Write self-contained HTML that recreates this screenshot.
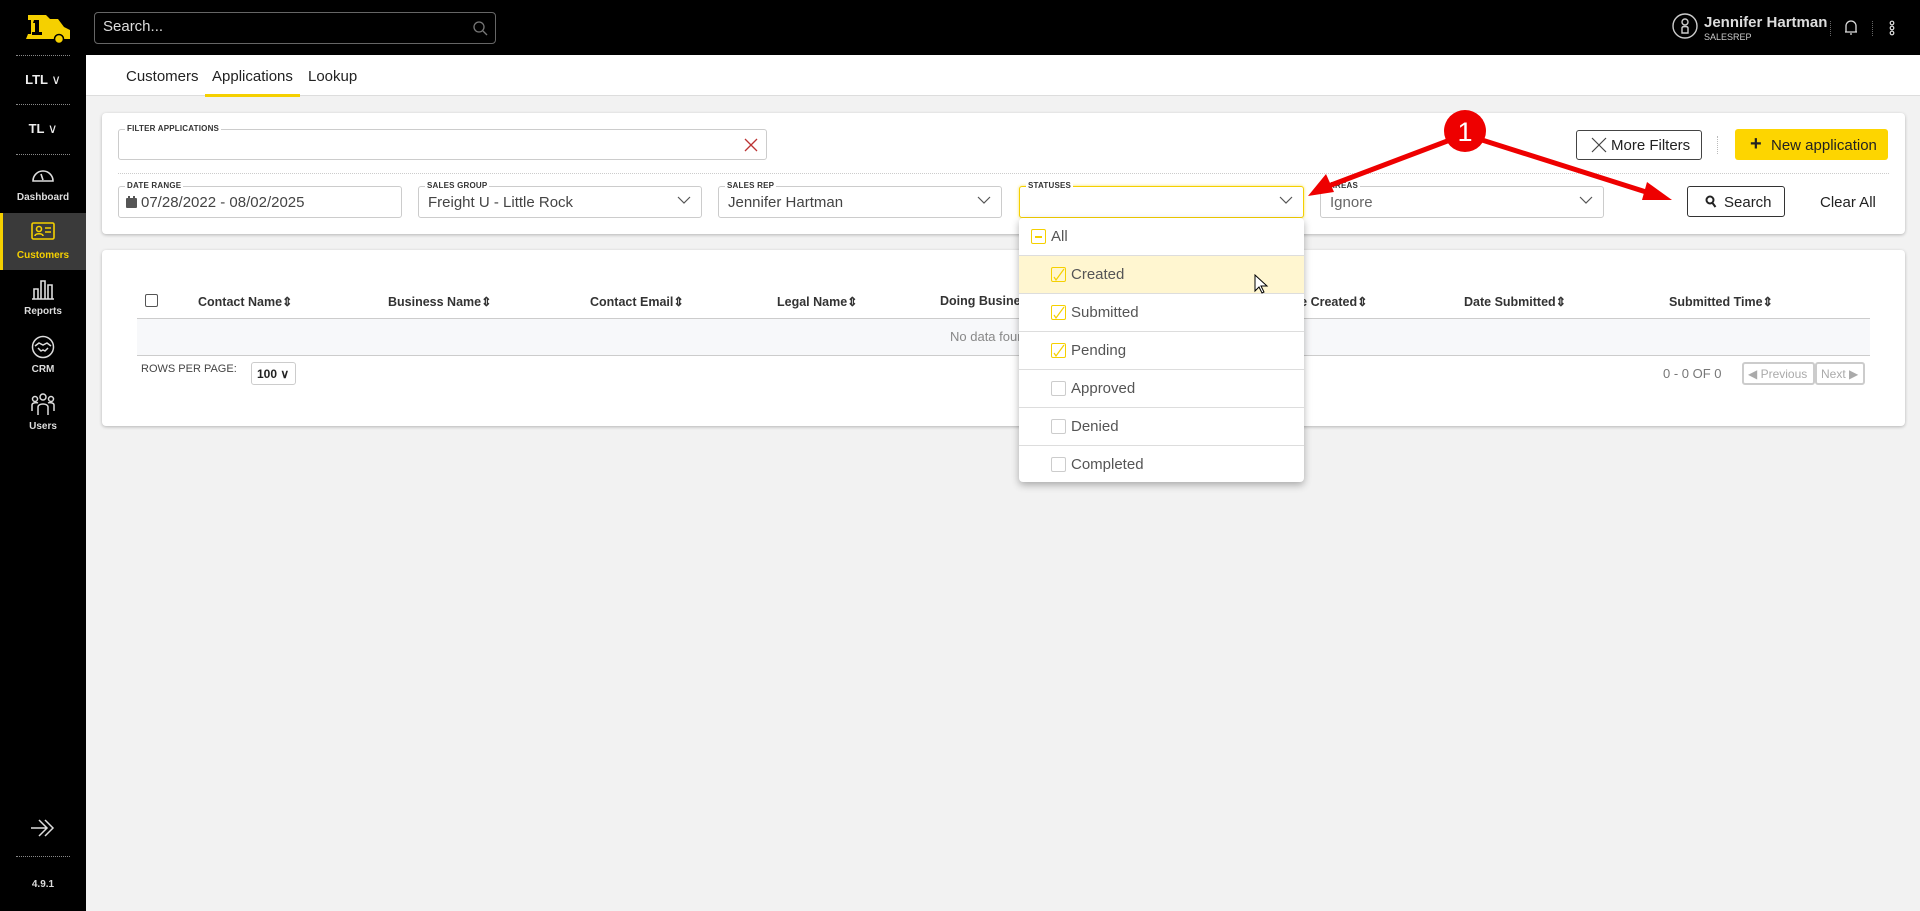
<!DOCTYPE html>
<html><head><meta charset="utf-8"><style>
*{box-sizing:border-box;margin:0;padding:0}
body{width:1920px;height:911px;overflow:hidden;background:#f2f2f2;font-family:"Liberation Sans",sans-serif;position:relative;color:#222}
.a{position:absolute}
.side{left:0;top:0;width:86px;height:911px;background:#000}
.top{left:86px;top:0;width:1834px;height:55px;background:#000}
.dot{position:absolute;left:16px;width:54px;border-top:1px dotted #888}
.sl{position:absolute;width:86px;text-align:center;color:#ddd;font-size:10px;font-weight:bold}
.card{background:#fff;border-radius:4px;box-shadow:0 1px 3px rgba(0,0,0,.25)}
.fld{position:absolute;border:1px solid #ccc;border-radius:3px;height:32px;background:#fff}
.lbl{position:absolute;top:-6px;left:6px;background:#fff;padding:0 2px;font-size:8px;font-weight:bold;color:#333;letter-spacing:.2px}
.val{position:absolute;left:9px;top:7px;font-size:15px;color:#444}
.chev{position:absolute;right:10px;top:8px}
.th{position:absolute;top:294px;font-size:12.5px;font-weight:bold;color:#333}
.dd{left:1019px;top:218px;width:285px;height:264px;background:#fff;border-radius:4px;box-shadow:0 3px 8px rgba(0,0,0,.3)}
.it{position:absolute;left:0;width:285px;height:38px;border-bottom:1px solid #ddd;font-size:15px;color:#555}
.cb{position:absolute;left:32px;top:11px;width:15px;height:15px;border:1px solid #ccc;border-radius:2px}
.cb.on{border-color:#f5d000}
.cb svg{position:absolute;left:1px;top:0}
.it span{position:absolute;left:52px;top:10px}
</style></head><body>
<div class="a side"></div>
<div class="a top"></div>
<svg class="a" style="left:22px;top:12px" width="50" height="32" viewBox="0 0 50 32"><path d="M6 3h18l4 4h8l6 8 6 3v9H4l2-5h3V8H6z" fill="#f5d000"/><path d="M12 8h5v12h3v3h-10v-3h3v-9h-2z" fill="#000"/><circle cx="37" cy="27" r="4.5" fill="#f5d000" stroke="#000" stroke-width="1.5"/></svg>
<div class="dot" style="top:55px"></div>
<div class="sl" style="top:72px;font-size:13px;color:#eee">LTL <span style="font-weight:normal">&#8744;</span></div>
<div class="dot" style="top:104px"></div>
<div class="sl" style="top:121px;font-size:13px;color:#eee">TL <span style="font-weight:normal">&#8744;</span></div>
<div class="dot" style="top:154px"></div>
<svg class="a" style="left:31px;top:164px" width="24" height="20" viewBox="0 0 24 20" fill="none" stroke="#ddd" stroke-width="1.6"><path d="M2 17A10 10 0 1 1 22 17Z"/><path d="M12 16l-2-6"/></svg>
<div class="sl" style="top:192px">Dashboard</div>
<div class="a" style="left:0;top:213px;width:86px;height:57px;background:#3a3a3a;border-left:3px solid #f5d000"></div>
<svg class="a" style="left:31px;top:222px" width="24" height="18" viewBox="0 0 24 18" fill="none" stroke="#f5d000" stroke-width="1.6"><rect x="1" y="1" width="22" height="16" rx="1.5"/><circle cx="8" cy="7" r="2.5"/><path d="M4 14c0-3 8-3 8 0M14 6h6M14 10h6"/></svg>
<div class="sl" style="top:250px;color:#f5d000">Customers</div>
<svg class="a" style="left:31px;top:278px" width="24" height="22" viewBox="0 0 24 22" fill="none" stroke="#ddd" stroke-width="1.6"><path d="M1 21h22M3 21V11h4v10M10 21V3h4v18M17 21V7h4v14"/></svg>
<div class="sl" style="top:306px">Reports</div>
<svg class="a" style="left:31px;top:335px" width="24" height="24" viewBox="0 0 24 24" fill="none" stroke="#ddd" stroke-width="1.5"><circle cx="12" cy="12" r="10.5"/><path d="M4 11l4-3 4 2 4-2 4 3M7 13l3 3 2-1 2 1 3-3"/></svg>
<div class="sl" style="top:364px">CRM</div>
<svg class="a" style="left:30px;top:392px" width="26" height="24" viewBox="0 0 26 24" fill="none" stroke="#ddd" stroke-width="1.5"><circle cx="13" cy="5" r="3"/><circle cx="5" cy="7" r="2.5"/><circle cx="21" cy="7" r="2.5"/><path d="M8 23v-8c0-4 10-4 10 0v8M2 19v-6c0-2 4-3 6-2M24 19v-6c0-2-4-3-6-2"/></svg>
<div class="sl" style="top:421px">Users</div>
<svg class="a" style="left:30px;top:818px" width="26" height="20" viewBox="0 0 26 20" fill="none" stroke="#ddd" stroke-width="1.5"><path d="M1 10h16M9 2l8 8-8 8M15 2l8 8-8 8"/></svg>
<div class="dot" style="top:856px"></div>
<div class="sl" style="top:879px">4.9.1</div>

<div class="a" style="left:94px;top:12px;width:402px;height:32px;border:1px solid #666;border-radius:4px"></div>
<div class="a" style="left:103px;top:18px;color:#ddd;font-size:15px">Search...</div>
<svg class="a" style="left:472px;top:20px" width="16" height="16" viewBox="0 0 16 16" fill="none" stroke="#777" stroke-width="1.3"><circle cx="7" cy="7" r="5"/><path d="M11 11l4 4"/></svg>
<svg class="a" style="left:1672px;top:13px" width="26" height="26" viewBox="0 0 26 26" fill="none" stroke="#ccc" stroke-width="1.4"><circle cx="13" cy="13" r="12"/><circle cx="13" cy="9" r="3"/><path d="M10 20v-5c0-2 6-2 6 0v5z"/></svg>
<div class="a" style="left:1704px;top:14px;color:#ddd;font-size:15px;font-weight:bold">Jennifer Hartman</div>
<div class="a" style="left:1704px;top:32px;color:#ccc;font-size:9px">SALESREP</div>
<div class="a" style="left:1830px;top:21px;height:15px;border-left:1px dotted #666"></div>
<svg class="a" style="left:1844px;top:19px" width="14" height="17" viewBox="0 0 14 17" fill="none" stroke="#ddd" stroke-width="1.3"><path d="M2 13V7a5 5 0 0 1 10 0v6zM1 13h12M6 15h2"/></svg>
<div class="a" style="left:1872px;top:21px;height:15px;border-left:1px dotted #666"></div>
<svg class="a" style="left:1889px;top:20px" width="6" height="16" viewBox="0 0 6 16" fill="none" stroke="#ddd" stroke-width="1.2"><circle cx="3" cy="3" r="1.8"/><circle cx="3" cy="8" r="1.8"/><circle cx="3" cy="13" r="1.8"/></svg>

<div class="a" style="left:86px;top:55px;width:1834px;height:41px;background:#fff;border-bottom:1px solid #ddd"></div>
<div class="a" style="left:126px;top:68px;font-size:15px;color:#222">Customers</div>
<div class="a" style="left:212px;top:68px;font-size:15px;color:#222">Applications</div>
<div class="a" style="left:205px;top:94px;width:95px;height:3px;background:#f5d000"></div>
<div class="a" style="left:308px;top:68px;font-size:15px;color:#222">Lookup</div>

<div class="a card" style="left:102px;top:113px;width:1803px;height:121px"></div>
<div class="fld" style="left:118px;top:129px;width:649px;height:31px"><div class="lbl">FILTER APPLICATIONS</div>
<svg style="position:absolute;right:7px;top:7px" width="16" height="16" viewBox="0 0 16 16" stroke="#b33" stroke-width="1.3"><path d="M2 2l12 12M14 2L2 14"/></svg></div>
<div class="a" style="left:118px;top:173px;width:1771px;border-top:1px dotted #ccc"></div>
<div class="a" style="left:1576px;top:130px;width:126px;height:30px;border:1px solid #444;border-radius:3px;background:#fff"></div>
<svg class="a" style="left:1591px;top:137px" width="16" height="16" viewBox="0 0 16 16" stroke="#444" stroke-width="1.2"><path d="M1 1l14 14M15 1L1 15"/></svg>
<div class="a" style="left:1611px;top:137px;font-size:15px;color:#222">More Filters</div>
<div class="a" style="left:1717px;top:136px;height:18px;border-left:1px dotted #bbb"></div>
<div class="a" style="left:1735px;top:129px;width:153px;height:31px;background:#fdd500;border-radius:3px"></div>
<div class="a" style="left:1750px;top:133px;font-size:20px;font-weight:bold">+</div>
<div class="a" style="left:1771px;top:137px;font-size:15px;color:#222">New application</div>

<div class="fld" style="left:118px;top:186px;width:284px"><div class="lbl">DATE RANGE</div>
<svg style="position:absolute;left:7px;top:9px" width="11" height="12" viewBox="0 0 11 12"><rect x="0" y="2" width="11" height="10" rx="1" fill="#555"/><rect x="2" y="0" width="2" height="3" fill="#555"/><rect x="7" y="0" width="2" height="3" fill="#555"/></svg>
<div class="val" style="left:22px">07/28/2022 - 08/02/2025</div></div>
<div class="fld" style="left:418px;top:186px;width:284px"><div class="lbl">SALES GROUP</div><div class="val">Freight U - Little Rock</div>
<svg class="chev" width="14" height="10" viewBox="0 0 14 10" fill="none" stroke="#555" stroke-width="1.2"><path d="M1 2l6 6 6-6"/></svg></div>
<div class="fld" style="left:718px;top:186px;width:284px"><div class="lbl">SALES REP</div><div class="val">Jennifer Hartman</div>
<svg class="chev" width="14" height="10" viewBox="0 0 14 10" fill="none" stroke="#555" stroke-width="1.2"><path d="M1 2l6 6 6-6"/></svg></div>
<div class="fld" style="left:1019px;top:186px;width:285px;border-color:#f5d000;box-shadow:0 0 3px #f5e060"><div class="lbl">STATUSES</div>
<svg class="chev" width="14" height="10" viewBox="0 0 14 10" fill="none" stroke="#555" stroke-width="1.2"><path d="M1 2l6 6 6-6"/></svg></div>
<div class="fld" style="left:1320px;top:186px;width:284px"><div class="lbl">AREAS</div><div class="val" style="color:#666">Ignore</div>
<svg class="chev" width="14" height="10" viewBox="0 0 14 10" fill="none" stroke="#555" stroke-width="1.2"><path d="M1 2l6 6 6-6"/></svg></div>
<div class="a" style="left:1687px;top:186px;width:98px;height:31px;border:1px solid #333;border-radius:3px;background:#fff"></div>
<svg class="a" style="left:1705px;top:195px" width="12" height="13" viewBox="0 0 12 13" fill="none" stroke="#222" stroke-width="2"><circle cx="5" cy="5" r="3.5"/><path d="M7.5 8l3 4"/></svg>
<div class="a" style="left:1724px;top:194px;font-size:15px;color:#222">Search</div>
<div class="a" style="left:1820px;top:194px;font-size:15px;color:#222">Clear All</div>

<div class="a card" style="left:102px;top:250px;width:1803px;height:176px"></div>
<div class="a" style="left:145px;top:294px;width:13px;height:13px;border:1px solid #555;border-radius:2px"></div>
<div class="th" style="left:198px">Contact Name&#8661;</div>
<div class="th" style="left:388px">Business Name&#8661;</div>
<div class="th" style="left:590px">Contact Email&#8661;</div>
<div class="th" style="left:777px">Legal Name&#8661;</div>
<div class="th" style="left:940px">Doing Business</div>
<div class="th" style="left:1280px">Date Created&#8661;</div>
<div class="th" style="left:1464px">Date Submitted&#8661;</div>
<div class="th" style="left:1669px">Submitted Time&#8661;</div>
<div class="a" style="left:137px;top:318px;width:1733px;height:38px;background:#f7f8fa;border-top:1px solid #ccc;border-bottom:1px solid #ccc"></div>
<div class="a" style="left:950px;top:329px;font-size:13px;color:#888">No data found</div>
<div class="a" style="left:141px;top:363px;font-size:11px;color:#444">ROWS PER PAGE:</div>
<div class="a" style="left:251px;top:362px;width:45px;height:23px;border:1px solid #ccc;border-radius:3px;font-size:12px;font-weight:bold;padding:4px 5px">100 &#8744;</div>
<div class="a" style="left:1663px;top:366px;font-size:13px;color:#777">0 - 0 OF 0</div>
<div class="a" style="left:1742px;top:362px;width:73px;height:23px;border:2px solid #ccc;border-radius:3px;font-size:12px;color:#aaa;padding:3px 4px">&#9664; Previous</div>
<div class="a" style="left:1815px;top:362px;width:50px;height:23px;border:2px solid #ccc;border-radius:3px;font-size:12px;color:#aaa;padding:3px 4px">Next &#9654;</div>

<div class="a dd">
<div class="it" style="top:0"><div class="cb on" style="left:12px"><div style="position:absolute;left:3px;top:6px;width:7px;height:1.5px;background:#f5d000"></div></div><span style="left:32px">All</span></div>
<div class="it" style="top:38px;background:#fff6d0"><div class="cb on"><svg width="13" height="13" viewBox="0 0 13 13" fill="none" stroke="#f5d000" stroke-width="1.2"><path d="M1 9l2 3 8-11"/></svg></div><span>Created</span></div>
<div class="it" style="top:76px"><div class="cb on"><svg width="13" height="13" viewBox="0 0 13 13" fill="none" stroke="#f5d000" stroke-width="1.2"><path d="M1 9l2 3 8-11"/></svg></div><span>Submitted</span></div>
<div class="it" style="top:114px"><div class="cb on"><svg width="13" height="13" viewBox="0 0 13 13" fill="none" stroke="#f5d000" stroke-width="1.2"><path d="M1 9l2 3 8-11"/></svg></div><span>Pending</span></div>
<div class="it" style="top:152px"><div class="cb"></div><span>Approved</span></div>
<div class="it" style="top:190px"><div class="cb"></div><span>Denied</span></div>
<div class="it" style="top:228px;border:none"><div class="cb"></div><span>Completed</span></div>
</div>
<svg class="a" style="left:1254px;top:274px" width="16" height="22" viewBox="0 0 16 22"><path d="M1 1v16l4-4 3 6 2-1-3-6h6z" fill="#fff" stroke="#000"/></svg>

<svg class="a" style="left:0;top:0" width="1920" height="911" viewBox="0 0 1920 911">
<g stroke="#e00" stroke-width="5" fill="none" stroke-linecap="round"><path d="M1450 140L1318 190"/><path d="M1482 140L1662 197"/></g>
<path d="M1308 196l18-22 8 18z" fill="#e00"/><path d="M1672 200l-25-18-5 18z" fill="#e00"/>
<circle cx="1465" cy="131" r="21" fill="#e00"/>
<text x="1465" y="141" fill="#fff" font-size="27" text-anchor="middle" font-family="Liberation Sans">1</text>
</svg>
</body></html>
